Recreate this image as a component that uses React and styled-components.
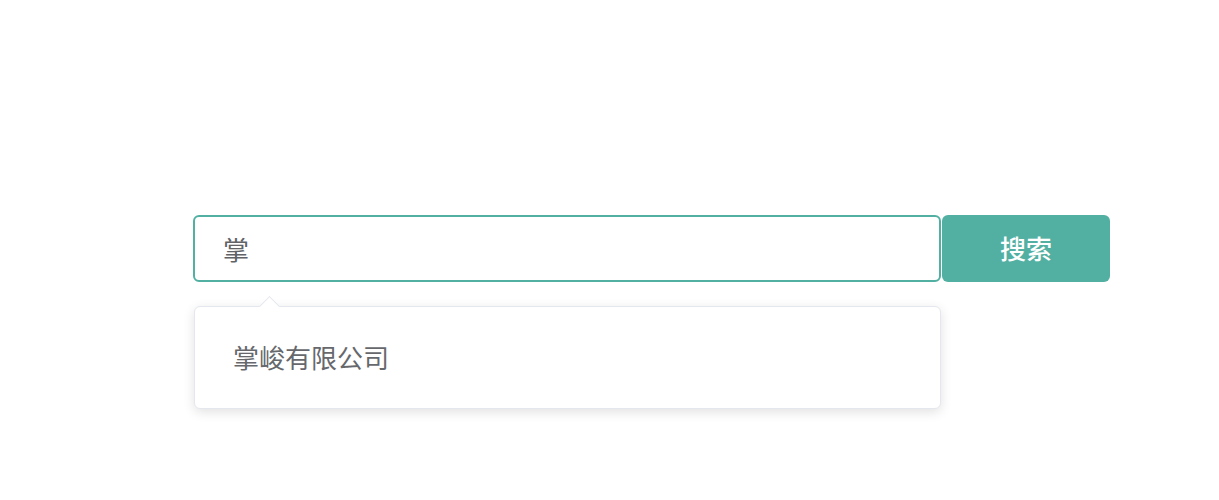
import React from "react";
import styled, { createGlobalStyle } from "styled-components";

const Global = createGlobalStyle`
  html, body { margin: 0; padding: 0; background: #fff; }
  body { font-family: "Noto Sans CJK SC", "Noto Sans", sans-serif; }
  * { box-sizing: border-box; }
`;

const Page = styled.div`
  padding: 215px 0 0 193px;
  height: 500px;
`;

const SearchBox = styled.div`
  display: flex;
  flex-direction: column;
  width: 918px;
`;

const Bar = styled.div`
  display: flex;
  gap: 1px;
`;

const Input = styled.input`
  width: 748px;
  height: 67px;
  border: 2px solid #52b0a2;
  border-radius: 6px;
  padding: 0 0 0 28px;
  font-family: inherit;
  font-size: 26px;
  color: #606266;
  outline: none;
  background: #fff;
`;

const Button = styled.button`
  width: 168px;
  height: 67px;
  border: none;
  border-radius: 6px;
  background: #52b0a2;
  color: #fff;
  font-family: inherit;
  font-size: 26px;
  font-weight: 500;
  cursor: pointer;
  padding: 0 0 2px 0;
`;

const Dropdown = styled.div`
  position: relative;
  margin: 24px 0 0 1px;
  width: 747px;
  border: 1px solid #e4e7ed;
  border-radius: 6px;
  background: #fff;
  box-shadow: 0 3px 12px 0 rgba(0, 0, 0, 0.12);
  padding: 13px 0 14px;
`;

const Arrow = styled.span`
  position: absolute;
  top: -8px;
  left: 67px;
  width: 15px;
  height: 15px;
  background: #fff;
  border-top: 1px solid #e4e7ed;
  border-left: 1px solid #e4e7ed;
  transform: rotate(45deg);
`;

const Item = styled.div`
  height: 74px;
  line-height: 74px;
  padding-left: 38px;
  font-size: 26px;
  color: #66686c;
`;

export default function App() {
  return (
    <>
      <Global />
      <Page>
        <SearchBox>
          <Bar>
            <Input defaultValue="掌" />
            <Button>搜索</Button>
          </Bar>
          <Dropdown>
            <Arrow />
            <Item>掌峻有限公司</Item>
          </Dropdown>
        </SearchBox>
      </Page>
    </>
  );
}
